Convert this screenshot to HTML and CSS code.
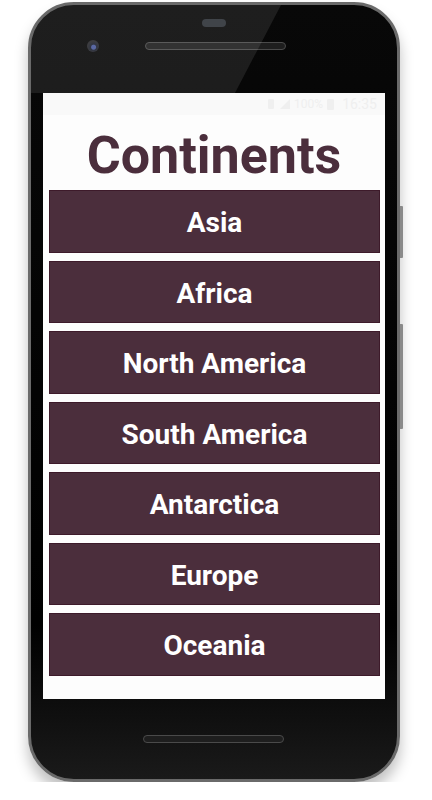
FILE: index.html
```html
<!DOCTYPE html>
<html lang="en">

<head>
  <title>Continents</title>
  <meta charset="utf-8">
  <meta name="viewport" content="width=device-width, initial-scale=1.0">
  <link rel="stylesheet" href="styles.css">
</head>

<body>
  <div class="phone">
    <span class="side-key power"></span>
    <span class="side-key volume"></span>

    <div class="bezel-top">
      <span class="notch"></span>
      <div class="bezel-row">
        <span class="camera"></span>
        <span class="speaker"></span>
      </div>
    </div>

    <div class="screen">
      <div class="status-bar">
        <svg class="status-icon" width="10" height="12" viewBox="0 0 10 12">
          <rect x="2" y="1" width="6" height="10" rx="1" fill="#efefef" />
        </svg>
        <svg class="status-icon" width="10" height="10" viewBox="0 0 10 10">
          <path d="M0 10 L10 0 L10 10 Z" fill="#efefef" />
        </svg>
        <span>100%</span>
        <svg class="status-icon" width="7" height="12" viewBox="0 0 7 12">
          <rect x="0" y="1" width="7" height="11" rx="1" fill="#efefef" />
        </svg>
        <span class="clock">16:35</span>
      </div>

      <h1 class="title">Continents</h1>

      <div class="list">
        <button class="item">Asia</button>
        <button class="item">Africa</button>
        <button class="item">North America</button>
        <button class="item">South America</button>
        <button class="item">Antarctica</button>
        <button class="item">Europe</button>
        <button class="item">Oceania</button>
      </div>
    </div>

    <div class="bezel-bottom">
      <span class="speaker"></span>
    </div>

    <!-- glass reflection on the top bezel -->
    <span class="glare"></span>
  </div>
</body>

</html>
```

FILE: styles.css
```css
html,
body {
  padding: 0;
  margin: 0;
  background: #fff;
}

body {
  font-family: Roboto, "Liberation Sans", Arial, sans-serif;
}

.phone {
  position: relative;
  box-sizing: border-box;
  width: 372px;
  height: 780px;
  margin: 2px 0 0 28px;
  padding: 0 12px 0 12px;
  border: 3px solid #6a6a6a;
  border-radius: 46px;
  background: linear-gradient(#080808, #000 80%, #1a1a1a);
  box-shadow: 0 10px 14px rgba(0, 0, 0, .25);
}

.side-key {
  position: absolute;
  right: -6px;
  width: 3px;
  border-radius: 0 1px 1px 0;
  background: #8a8a8a;
}

.power {
  top: 201px;
  height: 52px;
}

.volume {
  top: 319px;
  height: 105px;
}

.bezel-top {
  height: 88px;
  display: flex;
  flex-direction: column;
  align-items: center;
}

.notch {
  width: 24px;
  height: 8px;
  margin-top: 14px;
  border-radius: 4px;
  background: #2e3238;
}

.bezel-row {
  width: 100%;
  display: flex;
  align-items: center;
  margin-top: 13px;
}

.camera {
  width: 12px;
  height: 12px;
  margin-left: 44px;
  border-radius: 50%;
  background: radial-gradient(circle at 55% 60%, #4a5a9a 0 2px, #1d2230 3px, #2a2a2e 6px);
}

.speaker {
  width: 141px;
  height: 8px;
  border-radius: 4px;
  background: #1e1e1e;
  border: 1px solid #4a4a4a;
  box-sizing: border-box;
}

.bezel-row .speaker {
  margin-left: 46px;
}

.screen {
  height: 606px;
  background: #fdfdfd;
  display: flex;
  flex-direction: column;
}

.status-bar {
  height: 22px;
  display: flex;
  align-items: center;
  justify-content: flex-end;
  gap: 4px;
  padding-right: 8px;
  color: #efefef;
  font-size: 12px;
  background: #f9f9f9;
}

.clock {
  font-size: 14px;
  margin-left: 4px;
}

.title {
  margin: 15px 0 8px;
  text-align: center;
  font-size: 52px;
  line-height: 52px;
  font-weight: bold;
  color: #4b2e3c;
}

.list {
  display: flex;
  flex-direction: column;
  gap: 8px;
  padding: 0 5px 0 6px;
}

.item {
  height: 62.5px;
  padding: 3px 0 0;
  border: 1px solid #3d1a2a;
  background: #4b2e3c;
  color: #fff;
  font: bold 28px Roboto, "Liberation Sans", Arial, sans-serif;
  cursor: pointer;
}

.bezel-bottom {
  height: 81px;
  display: flex;
  justify-content: center;
  align-items: center;
}

.bezel-bottom .speaker {
  margin-left: -2px;
  margin-top: -2px;
}

.glare {
  position: absolute;
  top: 0;
  left: 0;
  width: 100%;
  height: 88px;
  pointer-events: none;
  border-top-left-radius: 43px;
  background: rgba(255, 255, 255, .09);
  clip-path: polygon(0 0, 250px 0, 204px 88px, 0 88px);
}
```
